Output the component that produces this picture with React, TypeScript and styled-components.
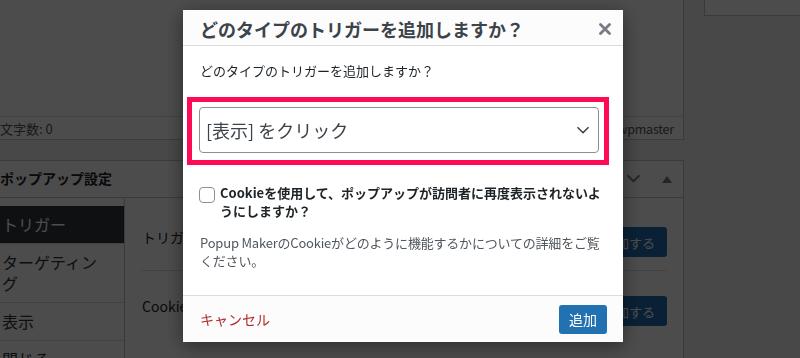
import styled, { createGlobalStyle } from 'styled-components';

const GlobalStyle = createGlobalStyle`
  html, body {
    margin: 0;
    padding: 0;
  }
  body {
    width: 800px;
    height: 358px;
    overflow: hidden;
    background: #f0f0f1;
    font-family: "Noto Sans CJK JP", "Noto Sans", sans-serif;
    color: #1d2327;
  }
  * {
    box-sizing: border-box;
  }
`;

/* ---------- WordPress admin page behind the modal ---------- */

const Page = styled.div`
  display: flex;
  align-items: flex-start;
  gap: 20px;
  width: 800px;
  height: 358px;
  overflow: hidden;
`;

const MainColumn = styled.div`
  flex: none;
  width: 684px;
  display: flex;
  flex-direction: column;
  gap: 20px;
`;

const EditorBox = styled.div`
  background: #fff;
  border-right: 1px solid #c3c4c7;
  border-bottom: 1px solid #c3c4c7;
`;

const EditorArea = styled.div`
  height: 116px;
`;

const StatusBar = styled.div`
  height: 23px;
  border-top: 1px solid #dcdcde;
  display: flex;
  align-items: center;
  justify-content: space-between;
  padding: 0 9px 0 0;
  font-size: 13px;
  color: #50575e;
`;

const LastEdited = styled.span`
  font-size: 12.5px;
  letter-spacing: -0.2px;
`;

const MetaBox = styled.div`
  background: #fff;
  border: 1px solid #c3c4c7;
  border-left: none;
  height: 200px;
`;

const MetaHeader = styled.div`
  height: 37px;
  display: flex;
  align-items: center;
  justify-content: space-between;
  border-bottom: 1px solid #c3c4c7;
`;

const MetaTitle = styled.h2`
  margin: 0;
  font-size: 14px;
  font-weight: 700;
  line-height: 1.4;
`;

const HandleGroup = styled.div`
  display: flex;
  height: 100%;
`;

const HandleButton = styled.span`
  width: 33px;
  display: flex;
  align-items: center;
  justify-content: center;
  color: #787c82;
`;

const MetaBody = styled.div`
  display: flex;
  height: 200px;
`;

const TabList = styled.ul`
  flex: none;
  width: 125px;
  margin: 0;
  padding: 8px 0 0;
  list-style: none;
  border-right: 1px solid #c3c4c7;
`;

const Tab = styled.li<{ $active?: boolean }>`
  padding: 8px 20px 8px 2px;
  font-size: 16px;
  line-height: 21px;
  border-bottom: 1px solid #dcdcde;
  background: ${(p) => (p.$active ? '#32373c' : 'transparent')};
  color: ${(p) => (p.$active ? '#fff' : '#2c3338')};
`;

const TabContent = styled.div`
  flex: 1;
  padding: 0 16px 0 17px;
`;

const Section = styled.div<{ $top: number; $last?: boolean }>`
  display: flex;
  align-items: flex-start;
  justify-content: space-between;
  padding: ${(p) => p.$top}px 0 13px;
  border-bottom: ${(p) => (p.$last ? 'none' : '1px solid #dcdcde')};
`;

const SectionHeading = styled.h3`
  margin: 0;
  font-size: 14px;
  font-weight: 400;
  line-height: 20px;
`;

const PrimaryButton = styled.span`
  height: 30px;
  padding: 0 12px;
  display: inline-flex;
  align-items: center;
  border-radius: 3px;
  background: #2271b1;
  color: #fff;
  font-size: 13px;
`;

const SideBox = styled.div`
  flex: 1;
  height: 16px;
  background: #fff;
  border-left: 1px solid #c3c4c7;
  border-bottom: 1px solid #c3c4c7;
`;

/* ---------- Modal ---------- */

const Overlay = styled.div`
  position: fixed;
  inset: 0;
  background: rgba(0, 0, 0, 0.7);
`;

const Modal = styled.div`
  position: fixed;
  left: 183px;
  top: 10px;
  width: 440px;
  height: 332px;
  display: flex;
  flex-direction: column;
  background: #fff;
  box-shadow: 0 4px 18px rgba(0, 0, 0, 0.45);
`;

const ModalHeader = styled.div`
  height: 36px;
  flex: none;
  display: flex;
  align-items: center;
  justify-content: space-between;
  padding: 2px 12px 0 17px;
  background: #fcfcfc;
  border-bottom: 1px solid #dcdcde;
`;

const ModalTitle = styled.h1`
  margin: 0;
  font-size: 18px;
  font-weight: 700;
  line-height: 24px;
  color: #3c434a;
`;

const CloseButton = styled.span`
  display: flex;
  color: #787c82;
`;

const ModalBody = styled.div`
  flex: 1;
  padding: 16px 17px 0;
`;

const FieldLabel = styled.label`
  display: block;
  font-size: 13px;
  line-height: 18px;
  color: #1d2327;
`;

const Highlight = styled.div`
  margin: 17px -3px 0 -13px;
  padding: 5px 5px 7px 7px;
  border: 5px solid #ff0a54;
`;

const Select = styled.div`
  height: 46px;
  display: flex;
  align-items: center;
  justify-content: space-between;
  padding: 0 9px 0 6px;
  border: 1px solid #8c8f94;
  border-radius: 4px;
  background: #fff;
  font-size: 18px;
  color: #3c434a;
`;

const CheckRow = styled.div`
  margin-top: 19px;
  display: flex;
  align-items: flex-start;
  gap: 5px;
`;

const CheckBox = styled.span`
  flex: none;
  width: 16px;
  height: 16px;
  margin: 3px 0 0 -1px;
  border: 1px solid #8c8f94;
  border-radius: 4px;
  background: #fff;
`;

const CheckText = styled.span`
  font-size: 13px;
  font-weight: 700;
  line-height: 18px;
  color: #1d2327;
`;

const Description = styled.p`
  margin: 14px 0 0;
  font-size: 13px;
  line-height: 18px;
  letter-spacing: -0.2px;
  color: #50575e;
`;

const ModalFooter = styled.div`
  height: 47px;
  flex: none;
  display: flex;
  align-items: center;
  justify-content: space-between;
  padding: 0 16px 0 17px;
  background: #fcfcfc;
  border-top: 1px solid #dcdcde;
`;

const CancelLink = styled.span`
  font-size: 14px;
  color: #b32d2e;
`;

const AddButton = styled.span`
  height: 29px;
  padding: 0 10px;
  display: inline-flex;
  align-items: center;
  border-radius: 3px;
  background: #2271b1;
  color: #fff;
  font-size: 14px;
`;

const ChevronDown = ({ size = 12, stroke = 1.6 }: { size?: number; stroke?: number }) => (
  <svg width={size} height={size * 0.7} viewBox="0 0 12 8" fill="none">
    <path d="M1 1.5 L6 6.5 L11 1.5" stroke="currentColor" strokeWidth={stroke} strokeLinecap="round" strokeLinejoin="round" />
  </svg>
);

const TriangleUp = () => (
  <svg width="10" height="7" viewBox="0 0 10 7">
    <path d="M0 7 L5 0 L10 7 Z" fill="currentColor" />
  </svg>
);

const CloseIcon = () => (
  <svg width="12" height="12" viewBox="0 0 12 12" fill="none">
    <path d="M1.5 1.5 L10.5 10.5 M10.5 1.5 L1.5 10.5" stroke="currentColor" strokeWidth="2.8" strokeLinecap="round" />
  </svg>
);

export default function App() {
  return (
    <>
      <GlobalStyle />
      <Page>
        <MainColumn>
          <EditorBox>
            <EditorArea />
            <StatusBar>
              <span>文字数: 0</span>
              <LastEdited>最終編集者: wpmaster</LastEdited>
            </StatusBar>
          </EditorBox>
          <MetaBox>
            <MetaHeader>
              <MetaTitle>ポップアップ設定</MetaTitle>
              <HandleGroup>
                <HandleButton>
                  <ChevronDown size={13} stroke={1.8} />
                </HandleButton>
                <HandleButton>
                  <TriangleUp />
                </HandleButton>
              </HandleGroup>
            </MetaHeader>
            <MetaBody>
              <TabList>
                <Tab $active>トリガー</Tab>
                <Tab>ターゲティング</Tab>
                <Tab>表示</Tab>
                <Tab>閉じる</Tab>
              </TabList>
              <TabContent>
                <Section $top={29}>
                  <SectionHeading>トリガー</SectionHeading>
                  <PrimaryButton>トリガーを追加する</PrimaryButton>
                </Section>
                <Section $top={25} $last>
                  <SectionHeading>Cookie</SectionHeading>
                  <PrimaryButton>Cookieを追加する</PrimaryButton>
                </Section>
              </TabContent>
            </MetaBody>
          </MetaBox>
        </MainColumn>
        <SideBox />
      </Page>

      <Overlay />
      <Modal>
        <ModalHeader>
          <ModalTitle>どのタイプのトリガーを追加しますか？</ModalTitle>
          <CloseButton>
            <CloseIcon />
          </CloseButton>
        </ModalHeader>
        <ModalBody>
          <FieldLabel>どのタイプのトリガーを追加しますか？</FieldLabel>
          <Highlight>
            <Select>
              <span>[表示] をクリック</span>
              <ChevronDown />
            </Select>
          </Highlight>
          <CheckRow>
            <CheckBox />
            <CheckText>Cookieを使用して、ポップアップが訪問者に再度表示されないようにしますか？</CheckText>
          </CheckRow>
          <Description>Popup MakerのCookieがどのように機能するかについての詳細をご覧ください。</Description>
        </ModalBody>
        <ModalFooter>
          <CancelLink>キャンセル</CancelLink>
          <AddButton>追加</AddButton>
        </ModalFooter>
      </Modal>
    </>
  );
}
